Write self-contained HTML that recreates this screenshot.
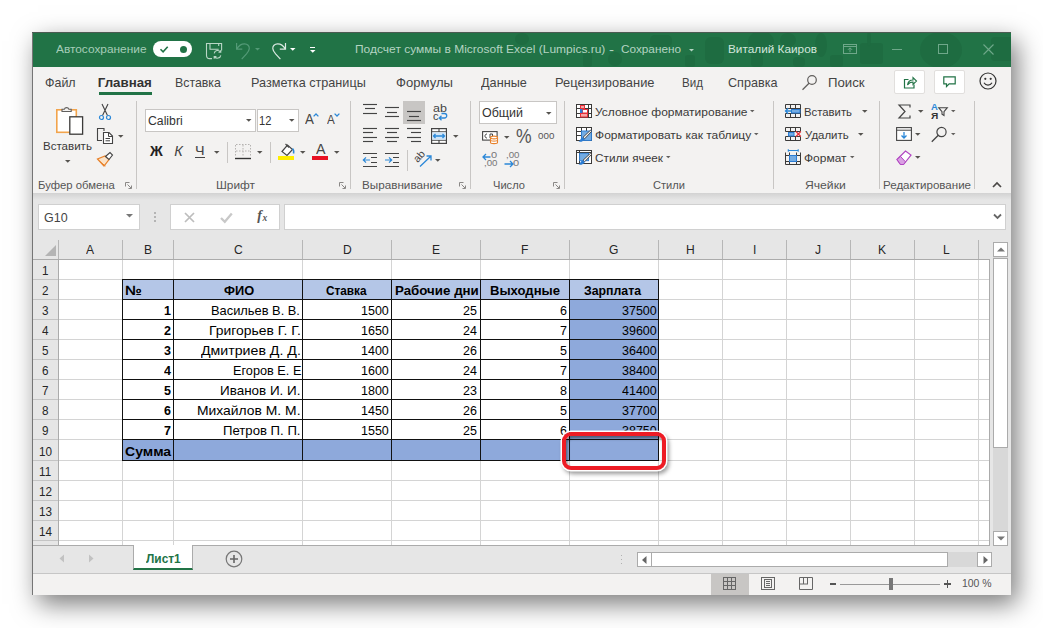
<!DOCTYPE html>
<html lang="ru"><head><meta charset="utf-8"><title>Excel</title>
<style>
html,body{margin:0;padding:0;}
body{width:1043px;height:628px;background:#fff;position:relative;overflow:hidden;font-family:"Liberation Sans", sans-serif;}
div,span,svg{position:absolute;box-sizing:border-box;}
span{white-space:nowrap;line-height:1;transform-origin:0 0;}
svg{overflow:visible;}
</style></head><body>
<div style="left:32px;top:32px;width:979px;height:563px;background:#f3f2f1;box-shadow:6px 9px 24px rgba(0,0,0,.52);"></div>
<div style="left:32px;top:32px;width:979px;height:1px;background:#4b5b52;"></div>
<div style="left:33px;top:33px;width:978px;height:34px;background:#217346;"></div>
<svg style="left:33px;top:33px;overflow:hidden" width="978" height="34" viewBox="0 0 978 34"><g fill="#1e6c41"><rect x="672" y="4" width="19" height="27" rx="6"/><rect x="718" y="16" width="12" height="18" rx="4"/><rect x="797" y="22" width="13" height="12" rx="3"/><rect x="827" y="10" width="23" height="21" rx="3"/><rect x="958" y="4" width="22" height="24" rx="4"/><rect x="652" y="22" width="10" height="12" rx="3"/><rect x="550" y="20" width="9" height="14" rx="3"/><rect x="617" y="2" width="22" height="12" rx="5"/><rect x="760" y="24" width="12" height="10" rx="4"/><ellipse cx="728" cy="9" rx="13" ry="11"/><ellipse cx="755" cy="7" rx="8" ry="7"/><ellipse cx="788" cy="12" rx="6" ry="12"/><ellipse cx="908" cy="17" rx="21" ry="18"/><ellipse cx="489" cy="6" rx="7" ry="6"/><ellipse cx="582" cy="26" rx="7" ry="7"/><ellipse cx="836" cy="6" rx="2" ry="8"/></g></svg>
<div style="left:32px;top:33px;width:1px;height:562px;background:#757575;"></div>
<span style="left:56.2px;top:44.27px;font-size:11.5px;color:#a6cdb8;transform:scaleX(1.0321);">Автосохранение</span>
<div style="left:153px;top:41px;width:39px;height:16px;background:#fff;border-radius:8px;"></div>
<svg style="left:159px;top:44px;" width="10" height="10" viewBox="0 0 10 10"><path d="M1.5 5.2l2.6 2.6l4.6-5" fill="none" stroke="#217346" stroke-width="1.6"/></svg>
<div style="left:179.5px;top:45.5px;width:7.0px;height:7.0px;background:#217346;border-radius:50%;"></div>
<svg style="left:206px;top:43px;" width="17" height="17" viewBox="0 0 17 17"><path d="M6 15.600h-2.500c-1.800 0-3-1.200-3-3v-12.100h15.100v7" fill="none" stroke="#b9d6c6" stroke-width="1.100"/><path d="M4 .500v5.700h8.700M12.700 .500v2.500" fill="none" stroke="#b9d6c6" stroke-width="1.100"/><path d="M8.200 10.300a3.600 3.600 0 0 1 6.300-1.500M14.800 12.300a3.600 3.600 0 0 1-6.300 1.600M14.800 7v2.300h-2.300M8.200 15.800v-2.200h2.200" fill="none" stroke="#b9d6c6" stroke-width="1.100"/></svg>
<svg style="left:236px;top:43px;" width="17" height="17" viewBox="0 0 17 17"><path d="M.600 0v6.100h5.700M.900 5.800C3 2 6 .800 8.500 .800C11.500 .800 13.500 3 13.300 5.600C13.200 7.500 12 9 10.500 10.800L5.700 16.200" fill="none" stroke="#549a77" stroke-width="1.200"/></svg>
<svg style="left:254.1px;top:47.25px;" width="7" height="4.5" viewBox="0 0 7 4.5"><path d="M1 1h5l-2.5 2.5z" fill="#549a77"/></svg>
<svg style="left:270.5px;top:43px;" width="17" height="17" viewBox="0 0 17 17"><g transform="translate(15.100 0) scale(-1 1)"><path d="M.600 0v6.100h5.700M.900 5.800C3 2 6 .800 8.500 .800C11.500 .800 13.500 3 13.300 5.600C13.200 7.500 12 9 10.500 10.800L5.700 16.200" fill="none" stroke="#dbe9e2" stroke-width="1.200"/></g></svg>
<svg style="left:288.95px;top:47.33px;" width="7.5" height="4.75" viewBox="0 0 7.5 4.75"><path d="M1 1h5.5l-2.75 2.75z" fill="#fff"/></svg>
<div style="left:310px;top:47px;width:5.3px;height:1.1px;background:#fff;"></div>
<svg style="left:308.85px;top:48.52px;" width="7.5" height="4.75" viewBox="0 0 7.5 4.75"><path d="M1 1h5.5l-2.75 2.75z" fill="#fff"/></svg>
<span style="left:354.76px;top:44.27px;font-size:11.5px;color:#b4d4c2;transform:scaleX(1.0422);">Подсчет суммы в Microsoft Excel (Lumpics.ru)</span>
<span style="left:609.03px;top:43.84px;font-size:12px;color:#b4d4c2;transform:scaleX(1.2549);">-</span>
<span style="left:621.45px;top:44.27px;font-size:11.5px;color:#b4d4c2;transform:scaleX(1.0243);">Сохранено</span>
<svg style="left:687.5px;top:47.75px;" width="7" height="4.5" viewBox="0 0 7 4.5"><path d="M1 1h5l-2.5 2.5z" fill="#b4d4c2"/></svg>
<span style="left:728.08px;top:44.27px;font-size:11.5px;color:#d3e6dc;transform:scaleX(1.0252);">Виталий Каиров</span>
<svg style="left:843px;top:44px;" width="14" height="10" viewBox="0 0 14 10"><rect x=".5" y=".5" width="13" height="9" fill="none" stroke="#6fa88a"/><path d="M.5 2.500h13M7 8.200v-4.200M5 5.800l2-2l2 2" fill="none" stroke="#6fa88a"/></svg>
<div style="left:892px;top:49px;width:10px;height:1px;background:#6fa88a;"></div>
<div style="left:937.5px;top:44px;width:10.0px;height:10px;border:1px solid #6fa88a;"></div>
<svg style="left:983px;top:44px;" width="11" height="11" viewBox="0 0 11 11"><path d="M.5 .5l10 10M10.500 .5l-10 10" stroke="#6fa88a" fill="none" stroke-width="1.1"/></svg>
<span style="left:44.72px;top:75.74px;font-size:13.3px;color:#444;transform:scaleX(0.9367);">Файл</span>
<span style="left:97.77px;top:75.74px;font-size:13.3px;color:#333;font-weight:700;">Главная</span>
<div style="left:99px;top:92px;width:53px;height:3px;background:#217346;"></div>
<span style="left:175.04px;top:75.74px;font-size:13.3px;color:#444;transform:scaleX(0.9282);">Вставка</span>
<span style="left:251.01px;top:75.74px;font-size:13.3px;color:#444;transform:scaleX(0.9513);">Разметка страницы</span>
<span style="left:396.39px;top:75.74px;font-size:13.3px;color:#444;transform:scaleX(0.9837);">Формулы</span>
<span style="left:480.7px;top:75.74px;font-size:13.3px;color:#444;transform:scaleX(0.9535);">Данные</span>
<span style="left:554.69px;top:75.74px;font-size:13.3px;color:#444;transform:scaleX(0.9691);">Рецензирование</span>
<span style="left:682.09px;top:75.74px;font-size:13.3px;color:#444;transform:scaleX(0.8714);">Вид</span>
<span style="left:728.41px;top:75.74px;font-size:13.3px;color:#444;transform:scaleX(0.9490);">Справка</span>
<svg style="left:800px;top:74px;" width="18" height="18" viewBox="0 0 18 18"><circle cx="12" cy="6" r="4.3" fill="none" stroke="#605e5c" stroke-width="1.2"/><path d="M9 9.200l-6.500 6.500" stroke="#605e5c" stroke-width="1.300"/></svg>
<span style="left:827.67px;top:75.74px;font-size:13.3px;color:#444;transform:scaleX(0.9938);">Поиск</span>
<div style="left:893.5px;top:70px;width:31.0px;height:23.5px;background:#fff;border:1px solid #e1dfdd;border-radius:2px;"></div>
<div style="left:933.5px;top:70px;width:31.0px;height:23.5px;background:#fff;border:1px solid #e1dfdd;border-radius:2px;"></div>
<svg style="left:903px;top:75px;" width="14" height="14" viewBox="0 0 14 14"><path d="M5.500 4.500h-4v8.500h9.500v-3.500" fill="none" stroke="#217346" stroke-width="1.2"/><path d="M4.500 10c.5-3.500 2.500-5 5.500-5v-2.500l3.500 3.500l-3.500 3.500v-2.500c-2.500 0-4 .8-5.500 3z" fill="none" stroke="#217346" stroke-width="1.100"/></svg>
<svg style="left:943px;top:76px;" width="13" height="12" viewBox="0 0 13 12"><path d="M.8 .8h11.400v7h-6l-2.700 2.700v-2.700h-2.700z" fill="none" stroke="#217346" stroke-width="1.200"/></svg>
<svg style="left:979px;top:72px;" width="18" height="18" viewBox="0 0 18 18"><circle cx="9" cy="9" r="8" fill="none" stroke="#333" stroke-width="1.200"/><circle cx="6.300" cy="6.800" r="1.100" fill="#333"/><circle cx="11.700" cy="6.800" r="1.100" fill="#333"/><path d="M5 10.800c1.800 3 6.200 3 8 0" fill="none" stroke="#333" stroke-width="1.200"/></svg>
<div style="left:136.0px;top:101px;width:1.0px;height:88px;background:#c8c6c4;"></div>
<div style="left:350.0px;top:101px;width:1.0px;height:88px;background:#c8c6c4;"></div>
<div style="left:470.0px;top:101px;width:1.0px;height:88px;background:#c8c6c4;"></div>
<div style="left:564.0px;top:101px;width:1.0px;height:88px;background:#c8c6c4;"></div>
<div style="left:773.0px;top:101px;width:1.0px;height:88px;background:#c8c6c4;"></div>
<div style="left:879.0px;top:101px;width:1.0px;height:88px;background:#c8c6c4;"></div>
<div style="left:974.0px;top:101px;width:1.0px;height:88px;background:#c8c6c4;"></div>
<span style="left:37.52px;top:180.36px;font-size:10.8px;color:#555;transform:scaleX(1.0467);">Буфер обмена</span>
<span style="left:216.07px;top:180.36px;font-size:10.8px;color:#555;transform:scaleX(1.0971);">Шрифт</span>
<span style="left:361.59px;top:180.36px;font-size:10.8px;color:#555;transform:scaleX(1.0827);">Выравнивание</span>
<span style="left:492.73px;top:180.36px;font-size:10.8px;color:#555;transform:scaleX(1.0276);">Число</span>
<span style="left:653.18px;top:180.36px;font-size:10.8px;color:#555;transform:scaleX(1.0275);">Стили</span>
<span style="left:805.43px;top:180.36px;font-size:10.8px;color:#555;transform:scaleX(1.1259);">Ячейки</span>
<span style="left:882.5px;top:180.36px;font-size:10.8px;color:#555;transform:scaleX(1.0705);">Редактирование</span>
<svg style="left:125px;top:182.0px;" width="7" height="7" viewBox="0 0 7 7"><path d="M.5 4.500v-4h4" fill="none" stroke="#8a8886"/><path d="M2.500 2.500l3.700 3.700M6.500 3.500v3h-3" fill="none" stroke="#8a8886"/></svg>
<svg style="left:339px;top:182.0px;" width="7" height="7" viewBox="0 0 7 7"><path d="M.5 4.500v-4h4" fill="none" stroke="#8a8886"/><path d="M2.500 2.500l3.700 3.700M6.500 3.500v3h-3" fill="none" stroke="#8a8886"/></svg>
<svg style="left:459px;top:182.0px;" width="7" height="7" viewBox="0 0 7 7"><path d="M.5 4.500v-4h4" fill="none" stroke="#8a8886"/><path d="M2.500 2.500l3.700 3.700M6.500 3.500v3h-3" fill="none" stroke="#8a8886"/></svg>
<svg style="left:553px;top:182.0px;" width="7" height="7" viewBox="0 0 7 7"><path d="M.5 4.500v-4h4" fill="none" stroke="#8a8886"/><path d="M2.500 2.500l3.700 3.700M6.500 3.500v3h-3" fill="none" stroke="#8a8886"/></svg>
<svg style="left:992px;top:182px;" width="10" height="6" viewBox="0 0 10 6"><path d="M1 5l4-4l4 4" fill="none" stroke="#4a4846" stroke-width="1.700"/></svg>
<svg style="left:55px;top:104px;" width="30" height="32" viewBox="0 0 30 32"><rect x="1.800" y="5.800" width="19.500" height="22.500" fill="#fff" stroke="#f2a44c" stroke-width="1.600"/><path d="M7 7.500v-2.200h2.300a2.400 2.400 0 0 1 4.600 0h2.300v2.200z" fill="#f3f2f1" stroke="#605e5c" stroke-width="1.100"/><rect x="14.800" y="12.800" width="12.800" height="17.400" fill="#fff" stroke="#3b3a39" stroke-width="1.300"/></svg>
<span style="left:42.5px;top:140.93px;font-size:11.3px;color:#3b3a39;transform:scaleX(1.0214);">Вставить</span>
<svg style="left:63.75px;top:159.12px;" width="7.5" height="4.75" viewBox="0 0 7.5 4.75"><path d="M1 1h5.5l-2.75 2.75z" fill="#55534f"/></svg>
<svg style="left:98px;top:103px;" width="14" height="18" viewBox="0 0 14 18"><path d="M4 1l5.500 11.500M10 1l-5.500 11.500" stroke="#444" stroke-width="1.100" fill="none"/><circle cx="3.500" cy="14.500" r="2" fill="none" stroke="#2b88d8" stroke-width="1.200"/><circle cx="10.500" cy="14.500" r="2" fill="none" stroke="#2b88d8" stroke-width="1.200"/></svg>
<svg style="left:96px;top:127px;" width="18" height="18" viewBox="0 0 18 18"><path d="M6 13.500h-4.500v-12h6.500v2.500" fill="none" stroke="#444" stroke-width="1.100"/><path d="M7.500 5.500h5.500l3.500 3.500v7.500h-9z" fill="#fff" stroke="#444" stroke-width="1.100"/><path d="M12.500 5.500v4h4M9.500 11.500h4.500M9.500 13.800h4.500" fill="none" stroke="#444" stroke-width="1"/></svg>
<svg style="left:117.25px;top:133.62px;" width="7.5" height="4.75" viewBox="0 0 7.5 4.75"><path d="M1 1h5.5l-2.75 2.75z" fill="#55534f"/></svg>
<svg style="left:96px;top:151px;" width="18" height="18" viewBox="0 0 18 18"><path d="M1.500 8l6.500 7l5-6.500l-4-3.500z" fill="#fbe3c8" stroke="#e8822b" stroke-width="1.200"/><path d="M3.500 10.500l6 4.500" stroke="#e8822b" stroke-width="1"/><path d="M9.500 5.500l4.500-4l2.500 2.500l-3.500 4.500z" fill="#fff" stroke="#444" stroke-width="1.100"/></svg>
<div style="left:145px;top:109px;width:111px;height:23px;background:#fff;border:1px solid #c8c6c4;"></div>
<div style="left:257px;top:109px;width:42px;height:23px;background:#fff;border:1px solid #c8c6c4;"></div>
<span style="left:148.13px;top:115.04px;font-size:12px;color:#333;transform:scaleX(1.0198);">Calibri</span>
<svg style="left:244.65px;top:118.12px;" width="7.5" height="4.75" viewBox="0 0 7.5 4.75"><path d="M1 1h5.5l-2.75 2.75z" fill="#55534f"/></svg>
<span style="left:258.91px;top:115.04px;font-size:12px;color:#333;transform:scaleX(0.9248);">12</span>
<svg style="left:287.65px;top:118.12px;" width="7.5" height="4.75" viewBox="0 0 7.5 4.75"><path d="M1 1h5.5l-2.75 2.75z" fill="#55534f"/></svg>
<span style="left:305.06px;top:112.45px;font-size:14px;color:#444;transform:scaleX(0.9500);">A</span>
<svg style="left:313.2px;top:112.5px;" width="6" height="4" viewBox="0 0 6 4"><path d="M.6 3.400l2.400-2.400l2.400 2.400" fill="none" stroke="#2b88d8" stroke-width="1.300"/></svg>
<span style="left:327.12px;top:114.14px;font-size:12px;color:#444;transform:scaleX(0.9700);">A</span>
<svg style="left:334.2px;top:113px;" width="6" height="4" viewBox="0 0 6 4"><path d="M.6 .600l2.400 2.400l2.400-2.400" fill="none" stroke="#2b88d8" stroke-width="1.300"/></svg>
<span style="left:149.54px;top:144.23px;font-size:14.5px;color:#222;font-weight:700;transform:scaleX(0.9700);">Ж</span>
<span style="left:174.13px;top:144.23px;font-size:14.5px;color:#444;font-style:italic;">К</span>
<span style="left:195.18px;top:144.07px;font-size:13.5px;color:#444;transform:scaleX(1.0631);">Ч</span>
<div style="left:195px;top:157px;width:10px;height:1px;background:#444;"></div>
<svg style="left:212.65px;top:150.12px;" width="7.5" height="4.75" viewBox="0 0 7.5 4.75"><path d="M1 1h5.5l-2.75 2.75z" fill="#55534f"/></svg>
<div style="left:227px;top:142px;width:1px;height:21px;background:#c8c6c4;"></div>
<svg style="left:235px;top:144px;" width="16" height="16" viewBox="0 0 16 16"><path d="M1 .500h14M.500 1v12M15.500 1v12M8 1v12M1 7h14" stroke="#b5b3b1" stroke-dasharray="1.500 1.500" fill="none"/><path d="M0 14.500h16" stroke="#333" stroke-width="1.400"/></svg>
<svg style="left:255.85px;top:150.12px;" width="7.5" height="4.75" viewBox="0 0 7.5 4.75"><path d="M1 1h5.5l-2.75 2.75z" fill="#55534f"/></svg>
<div style="left:270px;top:142px;width:1px;height:21px;background:#c8c6c4;"></div>
<svg style="left:278px;top:142px;" width="18" height="19" viewBox="0 0 18 19"><path d="M4 9.500l5.500-6.500l5 4.500l-5.500 6z" fill="#fff" stroke="#444" stroke-width="1.200"/><path d="M7.500 2l3.500 3.500" stroke="#444" stroke-width="1.100"/><path d="M14.500 6.500c1.500 1.500 1.500 3 1 5" stroke="#2b88d8" stroke-width="1.500" fill="none"/><rect x="0" y="14" width="16" height="4" fill="#ffee00"/></svg>
<svg style="left:298.65px;top:150.12px;" width="7.5" height="4.75" viewBox="0 0 7.5 4.75"><path d="M1 1h5.5l-2.75 2.75z" fill="#55534f"/></svg>
<span style="left:315.76px;top:142.03px;font-size:14.5px;color:#444;transform:scaleX(0.9800);">A</span>
<div style="left:312px;top:156px;width:16px;height:4px;background:#e81123;"></div>
<svg style="left:332.75px;top:150.12px;" width="7.5" height="4.75" viewBox="0 0 7.5 4.75"><path d="M1 1h5.5l-2.75 2.75z" fill="#55534f"/></svg>
<svg style="left:363px;top:104px;" width="14" height="10" viewBox="0 0 14 10"><path d="M0.0 0.5h14" stroke="#444" stroke-width="1.150"/><path d="M2.0 4.5h10" stroke="#444" stroke-width="1.150"/><path d="M0.0 9.5h14" stroke="#444" stroke-width="1.150"/></svg>
<svg style="left:385px;top:107px;" width="14" height="10" viewBox="0 0 14 10"><path d="M0.0 0.5h14" stroke="#444" stroke-width="1.150"/><path d="M2.0 5.5h10" stroke="#444" stroke-width="1.150"/><path d="M0.0 9.5h14" stroke="#444" stroke-width="1.150"/></svg>
<div style="left:403px;top:101px;width:22px;height:23px;background:#c8c6c4;"></div>
<svg style="left:407px;top:111px;" width="14" height="10" viewBox="0 0 14 10"><path d="M0.0 0.5h14" stroke="#444" stroke-width="1.150"/><path d="M2.0 5.5h10" stroke="#444" stroke-width="1.150"/><path d="M0.0 9.5h14" stroke="#444" stroke-width="1.150"/></svg>
<span style="left:433.11px;top:103.53px;font-size:10px;color:#444;transform:scaleX(1.2494);">ab</span>
<span style="left:433.16px;top:111.53px;font-size:10px;color:#444;transform:scaleX(1.1034);">c</span>
<svg style="left:438px;top:112px;" width="10" height="9" viewBox="0 0 10 9"><path d="M3.500 1.500h3a2.200 2.200 0 0 1 0 4.500h-5M3.500 3.800l-2.300 2.200l2.300 2.200" fill="none" stroke="#2b88d8" stroke-width="1.300"/></svg>
<svg style="left:363px;top:128px;" width="14" height="14" viewBox="0 0 14 14"><path d="M0 0.5h14" stroke="#444" stroke-width="1.150"/><path d="M0 4.5h10" stroke="#444" stroke-width="1.150"/><path d="M0 9.5h14" stroke="#444" stroke-width="1.150"/><path d="M0 13.5h10" stroke="#444" stroke-width="1.150"/></svg>
<svg style="left:385px;top:128px;" width="14" height="14" viewBox="0 0 14 14"><path d="M0.0 0.5h14" stroke="#444" stroke-width="1.150"/><path d="M2.0 4.5h10" stroke="#444" stroke-width="1.150"/><path d="M0.0 9.5h14" stroke="#444" stroke-width="1.150"/><path d="M2.0 13.5h10" stroke="#444" stroke-width="1.150"/></svg>
<svg style="left:407px;top:128px;" width="14" height="14" viewBox="0 0 14 14"><path d="M0 0.5h14" stroke="#444" stroke-width="1.150"/><path d="M4 4.5h10" stroke="#444" stroke-width="1.150"/><path d="M0 9.5h14" stroke="#444" stroke-width="1.150"/><path d="M4 13.5h10" stroke="#444" stroke-width="1.150"/></svg>
<svg style="left:430.5px;top:127.5px;" width="16" height="16" viewBox="0 0 16 16"><rect x=".600" y=".600" width="14.800" height="14.800" fill="#fff" stroke="#444" stroke-width="1.200"/><path d="M.600 3.800h14.800M.600 12.200h14.800M8 .600v3.200M8 12.200v3.200" stroke="#444" stroke-width="1.100"/><rect x="1.200" y="4.400" width="13.600" height="7.200" fill="#cfe4f7"/><path d="M2.500 8h11M4.500 6l-2 2l2 2M11.500 6l2 2l-2 2" fill="none" stroke="#2b88d8" stroke-width="1.300"/></svg>
<svg style="left:451.65px;top:134.12px;" width="7.5" height="4.75" viewBox="0 0 7.5 4.75"><path d="M1 1h5.5l-2.75 2.75z" fill="#55534f"/></svg>
<svg style="left:363px;top:152.5px;" width="14" height="14" viewBox="0 0 14 14"><path d="M0 .500h14M8 4.500h6M8 9.500h6M0 13.500h14" stroke="#444" stroke-width="1.100"/><path d="M.5 7h6.500M3 4.300l-2.700 2.700l2.700 2.700" fill="none" stroke="#2b88d8" stroke-width="1.200"/></svg>
<svg style="left:385px;top:152.5px;" width="14" height="14" viewBox="0 0 14 14"><path d="M0 .500h14M8 4.500h6M8 9.500h6M0 13.500h14" stroke="#444" stroke-width="1.100"/><path d="M0 7h6.500M4 4.300l2.700 2.700l-2.700 2.700" fill="none" stroke="#2b88d8" stroke-width="1.200"/></svg>
<div style="left:407px;top:150px;width:1px;height:21px;background:#c8c6c4;"></div>
<svg style="left:412px;top:148px" width="24" height="22" viewBox="0 0 24 22"><text x="0" y="0" font-size="10.500" fill="#444" font-family="Liberation Sans, sans-serif" transform="translate(5.800 15) rotate(-48)">ab</text></svg>
<svg style="left:418px;top:154px;" width="15" height="14" viewBox="0 0 15 14"><path d="M2 12.500l10.500-10M8.500 2h4.500v4.500" fill="none" stroke="#2b88d8" stroke-width="1.300"/></svg>
<svg style="left:433.85px;top:158.12px;" width="7.5" height="4.75" viewBox="0 0 7.5 4.75"><path d="M1 1h5.5l-2.75 2.75z" fill="#55534f"/></svg>
<div style="left:479px;top:101px;width:77.5px;height:22.5px;background:#fff;border:1px solid #c8c6c4;"></div>
<span style="left:482.12px;top:107.04px;font-size:12px;color:#333;transform:scaleX(1.0387);">Общий</span>
<svg style="left:545.45px;top:110.62px;" width="7.5" height="4.75" viewBox="0 0 7.5 4.75"><path d="M1 1h5.5l-2.75 2.75z" fill="#55534f"/></svg>
<svg style="left:482px;top:131px;" width="17" height="14" viewBox="0 0 17 14"><rect x=".600" y=".600" width="14.500" height="8.500" fill="#fff" stroke="#444" stroke-width="1.100"/><path d="M5 3c-1.500 0-2 1-2 2s.5 2 2 2M8 7v-4h2.500v2" fill="none" stroke="#444" stroke-width="1"/><path d="M8.500 6.500v5c0 1.500 7 1.500 7 0v-5" fill="#fff" stroke="#e8822b" stroke-width="1.100"/><ellipse cx="12" cy="6.500" rx="3.500" ry="1.400" fill="#fff" stroke="#e8822b" stroke-width="1.100"/><path d="M8.500 9c0 1.500 7 1.500 7 0" fill="none" stroke="#e8822b" stroke-width="1"/></svg>
<svg style="left:502.75px;top:134.62px;" width="7.5" height="4.75" viewBox="0 0 7.5 4.75"><path d="M1 1h5.5l-2.75 2.75z" fill="#55534f"/></svg>
<span style="left:516.2px;top:127.09px;font-size:19.5px;color:#555;transform:scaleX(0.9000);">%</span>
<span style="left:537.59px;top:130.66px;font-size:9.5px;color:#555;transform:scaleX(1.0315);">000</span>
<span style="left:491.16px;top:151.30px;font-size:8.5px;color:#777;transform:scaleX(1.2941);">0</span>
<span style="left:483.74px;top:159.30px;font-size:8.5px;color:#777;transform:scaleX(1.1426);">,00</span>
<svg style="left:482px;top:153px;" width="9" height="8" viewBox="0 0 9 8"><path d="M8.500 4h-7.500M4 1l-3 3l3 3" fill="none" stroke="#2b88d8" stroke-width="1.300"/></svg>
<span style="left:506.24px;top:151.30px;font-size:8.5px;color:#777;transform:scaleX(1.1426);">,00</span>
<span style="left:513.16px;top:159.30px;font-size:8.5px;color:#777;transform:scaleX(1.2941);">0</span>
<svg style="left:503.5px;top:160px;" width="10" height="8" viewBox="0 0 10 8"><path d="M.500 4h8M6 1l3 3l-3 3" fill="none" stroke="#2b88d8" stroke-width="1.300"/></svg>
<svg style="left:576px;top:104px;" width="16" height="14" viewBox="0 0 16 14"><rect x=".500" y=".500" width="15" height="13" fill="#fff" stroke="#3b3a39" stroke-width="1"/><path d="M4.500 .500v13M8.500 .500v13M12.500 .500v13M.500 4.500h15M.500 9.500h15" stroke="#3b3a39" stroke-width="1"/><rect x="4.500" y="1.500" width="4" height="3" fill="#f6a5a5" stroke="#e8313a" stroke-width="1"/><rect x="6.500" y="5.500" width="5" height="3.500" fill="#fff" stroke="#e8313a" stroke-width="1"/><rect x="4" y="5" width="2.500" height="4.500" fill="#2b7cd3"/><rect x="4.500" y="9.500" width="7" height="3.500" fill="#f6a5a5" stroke="#e8313a" stroke-width="1"/></svg>
<svg style="left:576px;top:127px;" width="16" height="15" viewBox="0 0 16 15"><rect x=".500" y=".500" width="15" height="13" fill="#fff" stroke="#3b3a39" stroke-width="1"/><path d="M5.500 .500v13M10.500 .500v13M.500 4.500h15M.500 8.500h15" stroke="#3b3a39" stroke-width="1"/><rect x="5.500" y="4" width="9.900" height="9.400" fill="#74ace3" stroke="#2b7cd3" stroke-width=".900"/><path d="M15.600 4.400l-7 7.400l-1.600 -1.500l7.400-7z" fill="#f3f2f1" stroke="#3b3a39" stroke-width=".900"/><path d="M7 10.300l1.700 1.600c-.500 2.200-3.500 3.200-6.200 2.700c1.800-.800 2-3.600 4.500-4.300z" fill="#2b7cd3"/></svg>
<svg style="left:576px;top:150px;" width="16" height="15" viewBox="0 0 16 15"><rect x=".500" y=".500" width="15" height="13" fill="#fff" stroke="#3b3a39" stroke-width="1"/><path d="M3.500 .500v13M.500 2.500h15" stroke="#3b3a39" stroke-width="1"/><rect x="3.600" y="3.300" width="9" height="7.400" fill="#74ace3" stroke="#2b7cd3" stroke-width=".900"/><path d="M15.600 4.400l-7 7.400l-1.600 -1.500l7.400-7z" fill="#f3f2f1" stroke="#3b3a39" stroke-width=".900"/><path d="M7 10.300l1.700 1.600c-.500 2.200-3.500 3.200-6.200 2.700c1.800-.800 2-3.600 4.500-4.300z" fill="#2b7cd3"/></svg>
<span style="left:595.11px;top:106.81px;font-size:11.8px;color:#3b3a39;transform:scaleX(1.0164);">Условное форматирование</span>
<svg style="left:749.25px;top:109.38px;" width="6.5" height="4.25" viewBox="0 0 6.5 4.25"><path d="M1 1h4.5l-2.25 2.25z" fill="#605e5c"/></svg>
<span style="left:594.74px;top:129.81px;font-size:11.8px;color:#3b3a39;transform:scaleX(1.0178);">Форматировать как таблицу</span>
<svg style="left:753.45px;top:132.38px;" width="6.5" height="4.25" viewBox="0 0 6.5 4.25"><path d="M1 1h4.5l-2.25 2.25z" fill="#605e5c"/></svg>
<span style="left:594.75px;top:152.81px;font-size:11.8px;color:#3b3a39;transform:scaleX(0.9966);">Стили ячеек</span>
<svg style="left:664.75px;top:155.38px;" width="6.5" height="4.25" viewBox="0 0 6.5 4.25"><path d="M1 1h4.5l-2.25 2.25z" fill="#605e5c"/></svg>
<svg style="left:785px;top:104px;" width="16" height="14" viewBox="0 0 16 14"><path d="M.500 4.500v-4h15v13h-15v-4M5.500 .500v4M5.500 9.500v4M10.500 .500v13M.500 4.500h15M.500 9.500h15" fill="none" stroke="#3b3a39" stroke-width="1"/><rect x="6.500" y="5.500" width="8.500" height="3.500" fill="#74ace3" stroke="#2b7cd3" stroke-width="1"/><path d="M7 7h-6.500M3.200 4.300l-2.700 2.700l2.700 2.700" fill="none" stroke="#2b88d8" stroke-width="1.300"/></svg>
<svg style="left:785px;top:127px;" width="16" height="14" viewBox="0 0 16 14"><path d="M.500 4.500v-4h15v4M.500 9.500v4h15v-4M5.500 .500v4M5.500 9.500v4M10.500 .500v4M10.500 9.500v4M.500 4.500h15M.500 9.500h15" fill="none" stroke="#3b3a39" stroke-width="1"/><rect x="3.500" y="5.500" width="5.500" height="3.500" fill="#74ace3" stroke="#2b7cd3" stroke-width="1"/><path d="M11 4.500l4.800 5M15.800 4.500l-4.800 5" stroke="#e8313a" stroke-width="1.200"/></svg>
<svg style="left:785px;top:149px;" width="16" height="16" viewBox="0 0 16 16"><path d="M3.300 1.500h9.900M3.300 .200v2.600M13.200 .200v2.600" stroke="#2b88d8" stroke-width="1.100" fill="none"/><path d="M.500 3.500v12h15v-12M4.500 3.500v12M11.500 3.500v12M.500 6.500h15M.500 12.500h15" fill="none" stroke="#3b3a39" stroke-width="1"/><rect x="4.500" y="6.500" width="7" height="6" fill="#74ace3" stroke="#2b7cd3" stroke-width="1"/></svg>
<span style="left:803.92px;top:106.87px;font-size:11.5px;color:#3b3a39;transform:scaleX(0.9847);">Вставить</span>
<svg style="left:860.95px;top:109.12px;" width="7.5" height="4.75" viewBox="0 0 7.5 4.75"><path d="M1 1h5.5l-2.75 2.75z" fill="#55534f"/></svg>
<span style="left:804.62px;top:129.87px;font-size:11.5px;color:#3b3a39;transform:scaleX(0.9953);">Удалить</span>
<svg style="left:856.65px;top:132.12px;" width="7.5" height="4.75" viewBox="0 0 7.5 4.75"><path d="M1 1h5.5l-2.75 2.75z" fill="#55534f"/></svg>
<span style="left:804.24px;top:152.87px;font-size:11.5px;color:#3b3a39;transform:scaleX(1.0408);">Формат</span>
<svg style="left:848.95px;top:155.38px;" width="6.5" height="4.25" viewBox="0 0 6.5 4.25"><path d="M1 1h4.5l-2.25 2.25z" fill="#605e5c"/></svg>
<svg style="left:897.5px;top:104px;" width="13" height="15" viewBox="0 0 13 15"><path d="M12 3.500v-2.500h-11l6 6.500l-6 6.500h11v-2.500" fill="none" stroke="#444" stroke-width="1.200"/></svg>
<svg style="left:916.55px;top:109.12px;" width="7.5" height="4.75" viewBox="0 0 7.5 4.75"><path d="M1 1h5.5l-2.75 2.75z" fill="#55534f"/></svg>
<span style="left:930.85px;top:102.46px;font-size:9.5px;color:#2b88d8;font-weight:700;transform:scaleX(0.9952);">A</span>
<span style="left:930.84px;top:110.76px;font-size:9.5px;color:#333;font-weight:700;transform:scaleX(1.0680);">Я</span>
<svg style="left:938px;top:106.5px;" width="10" height="10" viewBox="0 0 10 10"><path d="M.700 .700h8.600l-3.300 4v3.800l-2 -1.200v-2.600z" fill="none" stroke="#444" stroke-width="1.100"/></svg>
<svg style="left:950.15px;top:109.38px;" width="6.5" height="4.25" viewBox="0 0 6.5 4.25"><path d="M1 1h4.5l-2.25 2.25z" fill="#605e5c"/></svg>
<svg style="left:896px;top:127px;" width="16" height="14" viewBox="0 0 16 14"><rect x=".600" y=".600" width="14.800" height="12.800" fill="#fff" stroke="#444" stroke-width="1.100"/><path d="M.600 3.200h14.800" stroke="#444"/><path d="M8 5v6M5.500 8.500l2.500 2.500l2.500 -2.500" fill="none" stroke="#2b88d8" stroke-width="1.300"/></svg>
<svg style="left:914.25px;top:132.12px;" width="7.5" height="4.75" viewBox="0 0 7.5 4.75"><path d="M1 1h5.5l-2.75 2.75z" fill="#55534f"/></svg>
<svg style="left:931px;top:126px;" width="17" height="17" viewBox="0 0 17 17"><circle cx="10.500" cy="6" r="4.600" fill="none" stroke="#444" stroke-width="1.200"/><path d="M7.300 9.300l-6.500 6.500" stroke="#444" stroke-width="1.300"/></svg>
<svg style="left:950.15px;top:132.38px;" width="6.5" height="4.25" viewBox="0 0 6.5 4.25"><path d="M1 1h4.5l-2.25 2.25z" fill="#605e5c"/></svg>
<svg style="left:895.5px;top:149.5px;" width="16" height="15" viewBox="0 0 16 15"><path d="M1 9.500l8.500-8.500l5.500 4l-7.500 9.500h-3z" fill="#fff" stroke="#b146c2" stroke-width="1.200"/><path d="M1 9.500l3.500 5h3l2-2.600l-5-5.500z" fill="#d9a0e3" stroke="#b146c2" stroke-width="1"/></svg>
<svg style="left:914.25px;top:155.12px;" width="7.5" height="4.75" viewBox="0 0 7.5 4.75"><path d="M1 1h5.5l-2.75 2.75z" fill="#55534f"/></svg>
<div style="left:33px;top:193px;width:978px;height:354px;background:#e6e6e6;"></div>
<div style="left:33px;top:193px;width:978px;height:7px;background:linear-gradient(#d2d2d2,#e6e6e6);"></div>
<div style="left:38px;top:204px;width:102px;height:26px;background:#fff;border:1px solid #d0d0d0;"></div>
<span style="left:44.21px;top:211.00px;font-size:13px;color:#444;transform:scaleX(0.9603);">G10</span>
<svg style="left:125.0px;top:213.05px;" width="9" height="5.5" viewBox="0 0 9 5.5"><path d="M1 1h7l-3.5 3.5z" fill="#777"/></svg>
<div style="left:154px;top:212px;width:2px;height:2px;background:#b4b4b4;"></div>
<div style="left:154px;top:216px;width:2px;height:2px;background:#b4b4b4;"></div>
<div style="left:154px;top:220px;width:2px;height:2px;background:#b4b4b4;"></div>
<div style="left:170px;top:204px;width:110px;height:26px;background:#fff;border:1px solid #d0d0d0;"></div>
<svg style="left:184px;top:211.5px;" width="11" height="11" viewBox="0 0 11 11"><path d="M1 1l9 9M10 1l-9 9" stroke="#bdbdbd" stroke-width="1.700" fill="none"/></svg>
<svg style="left:219.5px;top:211.5px;" width="13" height="11" viewBox="0 0 13 11"><path d="M1 6l3.800 3.800l7-8.300" stroke="#c8c8c8" stroke-width="2.300" fill="none"/></svg>
<span style="left:257.17px;top:209.15px;font-size:14px;color:#555;font-weight:700;font-style:italic;font-family:'Liberation Serif',serif;">f</span>
<span style="left:262.43px;top:213.96px;font-size:9.5px;color:#555;font-weight:700;font-style:italic;font-family:'Liberation Serif',serif;">x</span>
<div style="left:284px;top:204px;width:722px;height:26px;background:#fff;border:1px solid #d0d0d0;"></div>
<svg style="left:993px;top:213px;" width="9" height="7" viewBox="0 0 9 7"><path d="M1 1.500l3.500 3.500l3.500-3.500" fill="none" stroke="#666" stroke-width="1.800"/></svg>
<div style="left:33px;top:260px;width:957px;height:285px;background:#fff;"></div>
<div style="left:33px;top:240px;width:957px;height:20px;background:#e6e6e6;"></div>
<div style="left:33px;top:260px;width:25px;height:285px;background:#e6e6e6;"></div>
<div style="left:122px;top:260px;width:1px;height:285px;background:#d4d4d4;"></div>
<div style="left:173px;top:260px;width:1px;height:285px;background:#d4d4d4;"></div>
<div style="left:302px;top:260px;width:1px;height:285px;background:#d4d4d4;"></div>
<div style="left:391px;top:260px;width:1px;height:285px;background:#d4d4d4;"></div>
<div style="left:480px;top:260px;width:1px;height:285px;background:#d4d4d4;"></div>
<div style="left:569px;top:260px;width:1px;height:285px;background:#d4d4d4;"></div>
<div style="left:658px;top:260px;width:1px;height:285px;background:#d4d4d4;"></div>
<div style="left:722px;top:260px;width:1px;height:285px;background:#d4d4d4;"></div>
<div style="left:786px;top:260px;width:1px;height:285px;background:#d4d4d4;"></div>
<div style="left:850px;top:260px;width:1px;height:285px;background:#d4d4d4;"></div>
<div style="left:914px;top:260px;width:1px;height:285px;background:#d4d4d4;"></div>
<div style="left:978px;top:260px;width:1px;height:285px;background:#d4d4d4;"></div>
<div style="left:59px;top:279px;width:931px;height:1px;background:#d4d4d4;"></div>
<div style="left:33px;top:279px;width:25px;height:1px;background:#c4c4c4;"></div>
<div style="left:59px;top:299px;width:931px;height:1px;background:#d4d4d4;"></div>
<div style="left:33px;top:299px;width:25px;height:1px;background:#c4c4c4;"></div>
<div style="left:59px;top:319px;width:931px;height:1px;background:#d4d4d4;"></div>
<div style="left:33px;top:319px;width:25px;height:1px;background:#c4c4c4;"></div>
<div style="left:59px;top:339px;width:931px;height:1px;background:#d4d4d4;"></div>
<div style="left:33px;top:339px;width:25px;height:1px;background:#c4c4c4;"></div>
<div style="left:59px;top:359px;width:931px;height:1px;background:#d4d4d4;"></div>
<div style="left:33px;top:359px;width:25px;height:1px;background:#c4c4c4;"></div>
<div style="left:59px;top:379px;width:931px;height:1px;background:#d4d4d4;"></div>
<div style="left:33px;top:379px;width:25px;height:1px;background:#c4c4c4;"></div>
<div style="left:59px;top:399px;width:931px;height:1px;background:#d4d4d4;"></div>
<div style="left:33px;top:399px;width:25px;height:1px;background:#c4c4c4;"></div>
<div style="left:59px;top:419px;width:931px;height:1px;background:#d4d4d4;"></div>
<div style="left:33px;top:419px;width:25px;height:1px;background:#c4c4c4;"></div>
<div style="left:59px;top:439px;width:931px;height:1px;background:#d4d4d4;"></div>
<div style="left:33px;top:439px;width:25px;height:1px;background:#c4c4c4;"></div>
<div style="left:59px;top:460px;width:931px;height:1px;background:#d4d4d4;"></div>
<div style="left:33px;top:460px;width:25px;height:1px;background:#c4c4c4;"></div>
<div style="left:59px;top:480px;width:931px;height:1px;background:#d4d4d4;"></div>
<div style="left:33px;top:480px;width:25px;height:1px;background:#c4c4c4;"></div>
<div style="left:59px;top:500px;width:931px;height:1px;background:#d4d4d4;"></div>
<div style="left:33px;top:500px;width:25px;height:1px;background:#c4c4c4;"></div>
<div style="left:59px;top:520px;width:931px;height:1px;background:#d4d4d4;"></div>
<div style="left:33px;top:520px;width:25px;height:1px;background:#c4c4c4;"></div>
<div style="left:59px;top:540px;width:931px;height:1px;background:#d4d4d4;"></div>
<div style="left:33px;top:540px;width:25px;height:1px;background:#c4c4c4;"></div>
<div style="left:58px;top:240px;width:1px;height:20px;background:#b6b6b6;"></div>
<div style="left:122px;top:240px;width:1px;height:20px;background:#b6b6b6;"></div>
<div style="left:173px;top:240px;width:1px;height:20px;background:#b6b6b6;"></div>
<div style="left:302px;top:240px;width:1px;height:20px;background:#b6b6b6;"></div>
<div style="left:391px;top:240px;width:1px;height:20px;background:#b6b6b6;"></div>
<div style="left:480px;top:240px;width:1px;height:20px;background:#b6b6b6;"></div>
<div style="left:569px;top:240px;width:1px;height:20px;background:#b6b6b6;"></div>
<div style="left:658px;top:240px;width:1px;height:20px;background:#b6b6b6;"></div>
<div style="left:722px;top:240px;width:1px;height:20px;background:#b6b6b6;"></div>
<div style="left:786px;top:240px;width:1px;height:20px;background:#b6b6b6;"></div>
<div style="left:850px;top:240px;width:1px;height:20px;background:#b6b6b6;"></div>
<div style="left:914px;top:240px;width:1px;height:20px;background:#b6b6b6;"></div>
<div style="left:978px;top:240px;width:1px;height:20px;background:#b6b6b6;"></div>
<div style="left:33px;top:259px;width:957px;height:1px;background:#ababab;"></div>
<div style="left:58px;top:260px;width:1px;height:285px;background:#ababab;"></div>
<div style="left:989px;top:259px;width:1px;height:286px;background:#ababab;"></div>
<div style="left:33px;top:545px;width:957px;height:1px;background:#ababab;"></div>
<svg style="left:44px;top:244px;" width="13" height="13" viewBox="0 0 13 13"><path d="M12 1v11h-11z" fill="#b4b4b4"/></svg>
<span style="left:86.47px;top:243.30px;font-size:13px;color:#262626;transform:scaleX(0.9300);">A</span>
<span style="left:143.97px;top:243.30px;font-size:13px;color:#262626;transform:scaleX(0.9300);">B</span>
<span style="left:233.63px;top:243.30px;font-size:13px;color:#262626;transform:scaleX(0.9300);">C</span>
<span style="left:342.63px;top:243.30px;font-size:13px;color:#262626;transform:scaleX(0.9300);">D</span>
<span style="left:431.97px;top:243.30px;font-size:13px;color:#262626;transform:scaleX(0.9300);">E</span>
<span style="left:521.31px;top:243.30px;font-size:13px;color:#262626;transform:scaleX(0.9300);">F</span>
<span style="left:609.3px;top:243.30px;font-size:13px;color:#262626;transform:scaleX(0.9300);">G</span>
<span style="left:686.13px;top:243.30px;font-size:13px;color:#262626;transform:scaleX(0.9300);">H</span>
<span style="left:752.82px;top:243.30px;font-size:13px;color:#262626;transform:scaleX(0.9300);">I</span>
<span style="left:815.48px;top:243.30px;font-size:13px;color:#262626;transform:scaleX(0.9300);">J</span>
<span style="left:878.47px;top:243.30px;font-size:13px;color:#262626;transform:scaleX(0.9300);">K</span>
<span style="left:943.14px;top:243.30px;font-size:13px;color:#262626;transform:scaleX(0.9300);">L</span>
<span style="left:42.25px;top:263.50px;font-size:13px;color:#262626;transform:scaleX(0.9000);">1</span>
<span style="left:42.25px;top:283.50px;font-size:13px;color:#262626;transform:scaleX(0.9000);">2</span>
<span style="left:42.25px;top:303.50px;font-size:13px;color:#262626;transform:scaleX(0.9000);">3</span>
<span style="left:42.25px;top:323.50px;font-size:13px;color:#262626;transform:scaleX(0.9000);">4</span>
<span style="left:42.25px;top:343.50px;font-size:13px;color:#262626;transform:scaleX(0.9000);">5</span>
<span style="left:42.25px;top:363.50px;font-size:13px;color:#262626;transform:scaleX(0.9000);">6</span>
<span style="left:42.25px;top:383.50px;font-size:13px;color:#262626;transform:scaleX(0.9000);">7</span>
<span style="left:42.25px;top:403.50px;font-size:13px;color:#262626;transform:scaleX(0.9000);">8</span>
<span style="left:42.25px;top:423.50px;font-size:13px;color:#262626;transform:scaleX(0.9000);">9</span>
<span style="left:38.99px;top:444.50px;font-size:13px;color:#262626;transform:scaleX(0.9000);">10</span>
<span style="left:39.43px;top:464.50px;font-size:13px;color:#262626;transform:scaleX(0.9000);">11</span>
<span style="left:38.99px;top:484.50px;font-size:13px;color:#262626;transform:scaleX(0.9000);">12</span>
<span style="left:38.99px;top:504.50px;font-size:13px;color:#262626;transform:scaleX(0.9000);">13</span>
<span style="left:38.99px;top:524.50px;font-size:13px;color:#262626;transform:scaleX(0.9000);">14</span>
<div style="left:123px;top:280px;width:535px;height:19px;background:#b4c6e7;"></div>
<div style="left:570px;top:300px;width:88px;height:139px;background:#8ea9db;"></div>
<div style="left:123px;top:440px;width:535px;height:20px;background:#8ea9db;"></div>
<div style="left:122px;top:279px;width:537px;height:1px;background:#111;"></div>
<div style="left:122px;top:299px;width:537px;height:1px;background:#111;"></div>
<div style="left:122px;top:319px;width:537px;height:1px;background:#111;"></div>
<div style="left:122px;top:339px;width:537px;height:1px;background:#111;"></div>
<div style="left:122px;top:359px;width:537px;height:1px;background:#111;"></div>
<div style="left:122px;top:379px;width:537px;height:1px;background:#111;"></div>
<div style="left:122px;top:399px;width:537px;height:1px;background:#111;"></div>
<div style="left:122px;top:419px;width:537px;height:1px;background:#111;"></div>
<div style="left:122px;top:439px;width:537px;height:1px;background:#111;"></div>
<div style="left:122px;top:460px;width:537px;height:1px;background:#111;"></div>
<div style="left:122px;top:279px;width:1px;height:182px;background:#111;"></div>
<div style="left:173px;top:279px;width:1px;height:182px;background:#111;"></div>
<div style="left:302px;top:279px;width:1px;height:182px;background:#111;"></div>
<div style="left:391px;top:279px;width:1px;height:182px;background:#111;"></div>
<div style="left:480px;top:279px;width:1px;height:182px;background:#111;"></div>
<div style="left:569px;top:279px;width:1px;height:182px;background:#111;"></div>
<div style="left:658px;top:279px;width:1px;height:182px;background:#111;"></div>
<span style="left:124.96px;top:283.89px;font-size:13.6px;color:#000;font-weight:700;transform:scaleX(1.1103);">№</span>
<span style="left:223.6px;top:283.89px;font-size:13.6px;color:#000;font-weight:700;transform:scaleX(0.9436);">ФИО</span>
<span style="left:326.33px;top:283.89px;font-size:13.6px;color:#000;font-weight:700;transform:scaleX(0.8678);">Ставка</span>
<span style="left:394.97px;top:283.89px;font-size:13.6px;color:#000;font-weight:700;transform:scaleX(0.9790);">Рабочие дни</span>
<span style="left:489.58px;top:283.89px;font-size:13.6px;color:#000;font-weight:700;transform:scaleX(0.9619);">Выходные</span>
<span style="left:584.11px;top:283.89px;font-size:13.6px;color:#000;font-weight:700;transform:scaleX(0.9061);">Зарплата</span>
<span style="left:164.04px;top:303.89px;font-size:13.6px;color:#000;font-weight:700;transform:scaleX(0.9200);">1</span>
<span style="left:211.4px;top:303.89px;font-size:13.6px;color:#000;transform:scaleX(0.9455);">Васильев В. В.</span>
<span style="left:361.17px;top:303.89px;font-size:13.6px;color:#000;transform:scaleX(0.9200);">1500</span>
<span style="left:463.28px;top:303.89px;font-size:13.6px;color:#000;transform:scaleX(0.9200);">25</span>
<span style="left:559.84px;top:303.89px;font-size:13.6px;color:#000;transform:scaleX(0.9200);">6</span>
<span style="left:621.51px;top:303.89px;font-size:13.6px;color:#000;transform:scaleX(0.9200);">37500</span>
<span style="left:164.04px;top:323.89px;font-size:13.6px;color:#000;font-weight:700;transform:scaleX(0.9200);">2</span>
<span style="left:208.51px;top:323.89px;font-size:13.6px;color:#000;transform:scaleX(1.0222);">Григорьев Г. Г.</span>
<span style="left:361.17px;top:323.89px;font-size:13.6px;color:#000;transform:scaleX(0.9200);">1650</span>
<span style="left:463.28px;top:323.89px;font-size:13.6px;color:#000;transform:scaleX(0.9200);">24</span>
<span style="left:559.84px;top:323.89px;font-size:13.6px;color:#000;transform:scaleX(0.9200);">7</span>
<span style="left:621.51px;top:323.89px;font-size:13.6px;color:#000;transform:scaleX(0.9200);">39600</span>
<span style="left:164.04px;top:343.89px;font-size:13.6px;color:#000;font-weight:700;transform:scaleX(0.9200);">3</span>
<span style="left:200.6px;top:343.89px;font-size:13.6px;color:#000;transform:scaleX(1.0418);">Дмитриев Д. Д.</span>
<span style="left:361.17px;top:343.89px;font-size:13.6px;color:#000;transform:scaleX(0.9200);">1400</span>
<span style="left:463.28px;top:343.89px;font-size:13.6px;color:#000;transform:scaleX(0.9200);">26</span>
<span style="left:559.84px;top:343.89px;font-size:13.6px;color:#000;transform:scaleX(0.9200);">5</span>
<span style="left:621.51px;top:343.89px;font-size:13.6px;color:#000;transform:scaleX(0.9200);">36400</span>
<span style="left:164.04px;top:363.89px;font-size:13.6px;color:#000;font-weight:700;transform:scaleX(0.9200);">4</span>
<span style="left:233.11px;top:363.89px;font-size:13.6px;color:#000;transform:scaleX(0.9358);">Егоров Е. Е</span>
<span style="left:361.17px;top:363.89px;font-size:13.6px;color:#000;transform:scaleX(0.9200);">1600</span>
<span style="left:463.28px;top:363.89px;font-size:13.6px;color:#000;transform:scaleX(0.9200);">24</span>
<span style="left:559.84px;top:363.89px;font-size:13.6px;color:#000;transform:scaleX(0.9200);">7</span>
<span style="left:621.51px;top:363.89px;font-size:13.6px;color:#000;transform:scaleX(0.9200);">38400</span>
<span style="left:164.04px;top:383.89px;font-size:13.6px;color:#000;font-weight:700;transform:scaleX(0.9200);">5</span>
<span style="left:219.95px;top:383.89px;font-size:13.6px;color:#000;transform:scaleX(0.9888);">Иванов И. И.</span>
<span style="left:361.17px;top:383.89px;font-size:13.6px;color:#000;transform:scaleX(0.9200);">1800</span>
<span style="left:463.28px;top:383.89px;font-size:13.6px;color:#000;transform:scaleX(0.9200);">23</span>
<span style="left:559.84px;top:383.89px;font-size:13.6px;color:#000;transform:scaleX(0.9200);">8</span>
<span style="left:621.51px;top:383.89px;font-size:13.6px;color:#000;transform:scaleX(0.9200);">41400</span>
<span style="left:164.04px;top:403.89px;font-size:13.6px;color:#000;font-weight:700;transform:scaleX(0.9200);">6</span>
<span style="left:196.91px;top:403.89px;font-size:13.6px;color:#000;transform:scaleX(1.0213);">Михайлов М. М.</span>
<span style="left:361.17px;top:403.89px;font-size:13.6px;color:#000;transform:scaleX(0.9200);">1450</span>
<span style="left:463.28px;top:403.89px;font-size:13.6px;color:#000;transform:scaleX(0.9200);">26</span>
<span style="left:559.84px;top:403.89px;font-size:13.6px;color:#000;transform:scaleX(0.9200);">5</span>
<span style="left:621.51px;top:403.89px;font-size:13.6px;color:#000;transform:scaleX(0.9200);">37700</span>
<span style="left:164.04px;top:423.89px;font-size:13.6px;color:#000;font-weight:700;transform:scaleX(0.9200);">7</span>
<span style="left:222.87px;top:423.89px;font-size:13.6px;color:#000;transform:scaleX(0.9674);">Петров П. П.</span>
<span style="left:361.17px;top:423.89px;font-size:13.6px;color:#000;transform:scaleX(0.9200);">1550</span>
<span style="left:463.28px;top:423.89px;font-size:13.6px;color:#000;transform:scaleX(0.9200);">25</span>
<span style="left:559.84px;top:423.89px;font-size:13.6px;color:#000;transform:scaleX(0.9200);">6</span>
<span style="left:621.51px;top:423.89px;font-size:13.6px;color:#000;transform:scaleX(0.9200);">38750</span>
<span style="left:124.96px;top:444.89px;font-size:13.6px;color:#000;font-weight:700;transform:scaleX(1.0322);">Сумма</span>
<div style="left:562px;top:432px;width:104px;height:38px;border:4px solid #ee1c25;border-radius:9px;box-shadow:0 0 0 1.500px #fff,2px 3px 4px 1px rgba(0,0,0,.4),inset 1.500px 2.500px 3px 0 rgba(0,0,0,.45);"></div>
<div style="left:993px;top:242px;width:15px;height:15px;background:#fff;border:1px solid #ababab;"></div>
<svg style="left:996.5px;top:247px;" width="8" height="5" viewBox="0 0 8 5"><path d="M0 4.500l4-4l4 4z" fill="#777"/></svg>
<div style="left:993px;top:257px;width:15px;height:274px;background:#d8d8d8;"></div>
<div style="left:993px;top:257.5px;width:15px;height:190.0px;background:#fff;border:1px solid #ababab;"></div>
<div style="left:993px;top:531px;width:15px;height:14.5px;background:#fff;border:1px solid #ababab;"></div>
<svg style="left:996.5px;top:536px;" width="8" height="5" viewBox="0 0 8 5"><path d="M0 .500l4 4l4-4z" fill="#777"/></svg>
<div style="left:33px;top:546px;width:978px;height:27px;background:#e6e6e6;"></div>
<svg style="left:59px;top:554px;" width="6" height="9" viewBox="0 0 6 9"><path d="M5 .500v8l-4.500-4z" fill="#c2c2c2"/></svg>
<svg style="left:88px;top:554px;" width="6" height="9" viewBox="0 0 6 9"><path d="M1 .500v8l4.500-4z" fill="#c2c2c2"/></svg>
<div style="left:133px;top:545px;width:60px;height:25px;background:#fff;border-left:1px solid #ababab;border-right:1px solid #ababab;border-bottom:2px solid #217346;"></div>
<span style="left:145.6px;top:551.87px;font-size:13.5px;color:#217346;font-weight:700;transform:scaleX(0.8806);">Лист1</span>
<svg style="left:225px;top:550px;" width="18" height="18" viewBox="0 0 18 18"><circle cx="9" cy="9" r="7.800" fill="none" stroke="#777" stroke-width="1.200"/><path d="M9 5v8M5 9h8" stroke="#666" stroke-width="1.600"/></svg>
<div style="left:620.5px;top:554.5px;width:1.5px;height:1.5px;background:#b0b0b0;"></div>
<div style="left:620.5px;top:558.5px;width:1.5px;height:1.5px;background:#b0b0b0;"></div>
<div style="left:620.5px;top:562.5px;width:1.5px;height:1.5px;background:#b0b0b0;"></div>
<div style="left:637px;top:552px;width:15px;height:15px;background:#fff;border:1px solid #ababab;"></div>
<svg style="left:642px;top:556px;" width="5" height="8" viewBox="0 0 5 8"><path d="M4.500 0v8l-4.500-4z" fill="#666"/></svg>
<div style="left:652px;top:552px;width:325px;height:15px;background:#d8d8d8;"></div>
<div style="left:651px;top:552px;width:297px;height:15px;background:#fff;border:1px solid #ababab;"></div>
<div style="left:977px;top:552px;width:15px;height:15px;background:#fff;border:1px solid #ababab;"></div>
<svg style="left:983px;top:556px;" width="5" height="8" viewBox="0 0 5 8"><path d="M.500 0v8l4.500-4z" fill="#666"/></svg>
<div style="left:33px;top:573px;width:978px;height:22px;background:#f3f2f1;border-top:1px solid #c6c6c6;"></div>
<div style="left:711px;top:574px;width:38px;height:21px;background:#c8c6c4;"></div>
<svg style="left:723px;top:577px;" width="13" height="13" viewBox="0 0 13 13"><rect x=".500" y=".500" width="12" height="12" fill="none" stroke="#666"/><path d="M4.500 .500v12M8.500 .500v12M.500 4.500h12M.500 8.500h12" stroke="#666"/></svg>
<svg style="left:761px;top:577px;" width="14" height="13" viewBox="0 0 14 13"><rect x=".500" y=".500" width="13" height="12" fill="none" stroke="#666"/><rect x="3.500" y="2.500" width="7" height="8" fill="none" stroke="#666"/><path d="M5 4.500h4M5 6.500h4M5 8.500h4" stroke="#666"/></svg>
<svg style="left:799px;top:577px;" width="14" height="13" viewBox="0 0 14 13"><path d="M.500 .500h13v12h-13zM4.500 .500v6.500M8.500 .500v6.500M.500 7h8.500" fill="none" stroke="#666"/></svg>
<div style="left:830px;top:583px;width:6px;height:2px;background:#555;"></div>
<div style="left:840px;top:583.5px;width:100px;height:1.0px;background:#999;"></div>
<div style="left:888.5px;top:578px;width:4.5px;height:11.5px;background:#777;"></div>
<div style="left:944px;top:583px;width:7px;height:1.6px;background:#555;"></div>
<div style="left:946.7px;top:580px;width:1.6px;height:7.5px;background:#555;"></div>
<span style="left:962.25px;top:578.12px;font-size:11.2px;color:#555;transform:scaleX(0.9341);">100 %</span>
</body></html>
